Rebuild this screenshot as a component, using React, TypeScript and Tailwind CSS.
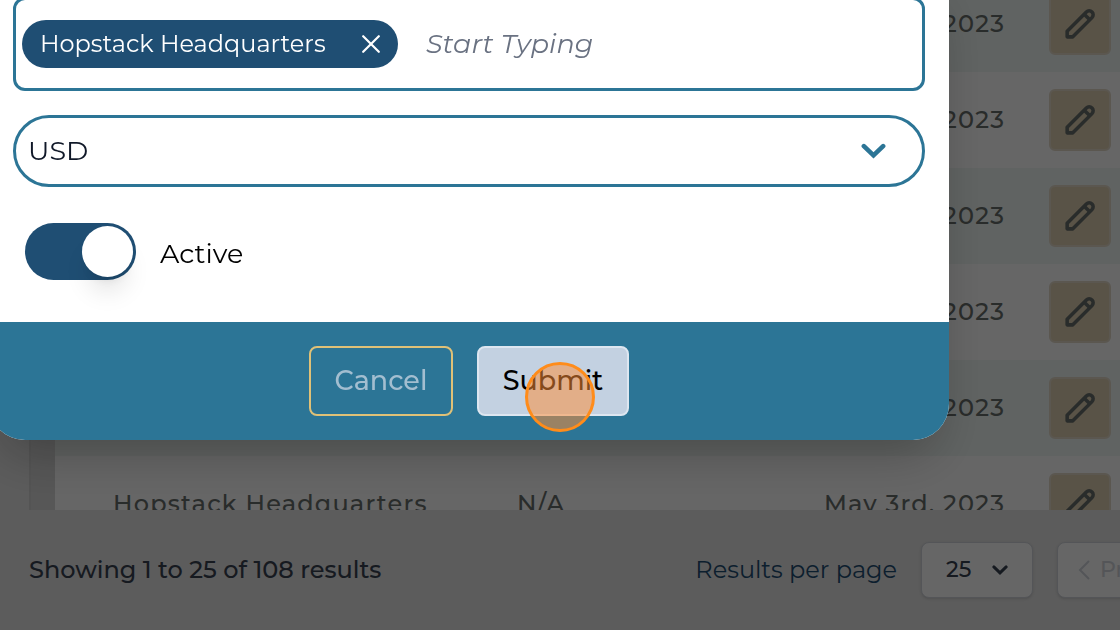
import React, { useState } from 'react';

const rows = [
  { id: 1, warehouse: 'Hopstack Headquarters', code: 'N/A', date: 'May 3rd, 2023' },
  { id: 2, warehouse: 'Hopstack Headquarters', code: 'N/A', date: 'May 3rd, 2023' },
  { id: 3, warehouse: 'Hopstack Headquarters', code: 'N/A', date: 'May 3rd, 2023' },
  { id: 4, warehouse: 'Hopstack Headquarters', code: 'N/A', date: 'May 3rd, 2023' },
  { id: 5, warehouse: 'Hopstack Headquarters', code: 'N/A', date: 'May 3rd, 2023' },
  { id: 6, warehouse: 'Hopstack Headquarters', code: 'N/A', date: 'May 3rd, 2023' },
];

function PencilIcon() {
  return (
    <svg width="30" height="30" viewBox="0 0 32 32" fill="none" stroke="currentColor" strokeWidth="3.8" strokeLinejoin="round">
      <path d="M2.300 29.700v-6L22.800 3.200a4.300 4.300 0 0 1 6 0a4.300 4.300 0 0 1 0 6L8.300 29.700z" />
      <path d="M20.500 5.500l6 6" />
    </svg>
  );
}

function ChevronIcon({ className }: { className: string }) {
  return (
    <svg className={className} viewBox="0 0 26 16" fill="none" stroke="currentColor" strokeWidth="4.8" strokeLinecap="round">
      <path d="M3 3l10 9.6L23 3" />
    </svg>
  );
}

function ResultsTable() {
  return (
    <table className="-mt-6 w-full table-fixed bg-white text-left text-2xl font-medium tracking-wider text-[#686e6b]">
      <colgroup>
        <col className="w-[404px]" />
        <col className="w-[307px]" />
        <col />
        <col className="w-[71px]" />
      </colgroup>
      <tbody>
        {rows.map((row) => (
          <tr key={row.id} className="h-24 odd:bg-[#f0f7f4]">
            <td className="pl-[58px]">{row.warehouse}</td>
            <td className="pl-[58px]">{row.code}</td>
            <td className="pl-[58px] whitespace-nowrap">{row.date}</td>
            <td>
              <button
                type="button"
                aria-label="Edit"
                className="flex size-[62px] items-center justify-center rounded-md border-2 border-[#e3dac9] bg-[#dfd0b2]"
              >
                <PencilIcon />
              </button>
            </td>
          </tr>
        ))}
      </tbody>
    </table>
  );
}

function Pagination() {
  return (
    <footer className="flex h-[120px] shrink-0 items-center bg-[#e5e5e5] pl-[29px] text-2xl">
      <p className="flex-1 font-medium text-[#374151]">Showing 1 to 25 of 108 results</p>
      <label htmlFor="page-size" className="mr-6 text-[#1f4e73]">Results per page</label>
      <div className="mr-6 grid h-14 w-[112px] shrink-0 items-center rounded-lg border border-gray-300 bg-white shadow-sm">
        <select
          id="page-size"
          defaultValue="25"
          className="h-full w-full appearance-none pl-6 text-[22px] font-medium text-[#374151] [grid-area:1/1]"
        >
          <option>25</option>
          <option>50</option>
        </select>
        <ChevronIcon className="pointer-events-none mr-6 h-[10px] w-4 justify-self-end text-[#374151] [grid-area:1/1]" />
      </div>
      <button
        type="button"
        className="-mr-[97px] flex h-14 w-40 shrink-0 items-center gap-[10px] rounded-lg border border-gray-300 bg-white pl-5 text-[22px] font-medium text-gray-300 shadow-sm"
      >
        <svg width="12" height="20" viewBox="0 0 12 20" fill="none" stroke="currentColor" strokeWidth="2" strokeLinecap="round">
          <path d="M10.500 1.500L2 10l8.500 8.500" />
        </svg>
        Prev
      </button>
    </footer>
  );
}

export default function App() {
  const [tags, setTags] = useState(['Hopstack Headquarters']);
  const [active, setActive] = useState(true);

  return (
    <div className="relative flex h-screen flex-col overflow-hidden bg-[#e5e5e5] font-[Montserrat,Inter,sans-serif]">
      <main className="flex min-h-0 flex-1 overflow-hidden pl-[29px]">
        <div className="min-w-0 flex-1 self-start border-l-2 border-[#d2d2d2] bg-[#d9d9d9] pl-6">
          <ResultsTable />
        </div>
      </main>
      <Pagination />

      <div className="fixed inset-0 flex items-start overflow-hidden bg-black/60">
        <form
          onSubmit={(e) => e.preventDefault()}
          className="-mt-[27px] mr-[171px] -ml-[11px] flex-1 overflow-hidden rounded-b-[36px] bg-white shadow-2xl"
        >
          <div className="px-6 pt-6 pb-[42px] text-[27px]">
            <div className="flex h-[94px] items-center rounded-xl border-3 border-[#2c7596] pl-[6px]">
              {tags.map((tag) => (
                <span key={tag} className="flex h-12 w-[376px] items-center justify-between rounded-full bg-[#1f4e73] px-[18px] text-2xl text-white">
                  {tag}
                  <button type="button" aria-label={`Remove ${tag}`} onClick={() => setTags(tags.filter((t) => t !== tag))}>
                    <svg width="18" height="18" viewBox="0 0 18 18" fill="none" stroke="currentColor" strokeWidth="2.2" strokeLinecap="round">
                      <path d="M1.200 1.200l15.600 15.600M16.800 1.200L1.200 16.800" />
                    </svg>
                  </button>
                </span>
              ))}
              <input
                type="text"
                aria-label="Warehouses"
                placeholder="Start Typing"
                className="ml-7 min-w-0 flex-1 outline-none placeholder:text-gray-500 placeholder:italic"
              />
            </div>

            <div className="mt-6 grid h-[72px] items-center rounded-full border-3 border-[#2c7596]">
              <select
                aria-label="Currency"
                defaultValue="USD"
                className="h-full w-full appearance-none rounded-full pl-3 text-gray-900 [grid-area:1/1]"
              >
                <option>USD</option>
                <option>EUR</option>
              </select>
              <ChevronIcon className="pointer-events-none mr-9 h-4 w-[25px] justify-self-end text-[#2c7596] [grid-area:1/1]" />
            </div>

            <label className="mt-9 ml-3 flex w-fit items-center gap-6 text-black">
              <input type="checkbox" checked={active} onChange={(e) => setActive(e.target.checked)} className="peer sr-only" />
              <span className="flex h-[57px] w-[111px] justify-start rounded-full bg-gray-300 p-[3px] peer-checked:justify-end peer-checked:bg-[#1f4e73]">
                <span className="size-[51px] rounded-full bg-white shadow-xl" />
              </span>
              <span className="pt-[6px]">Active</span>
            </label>
          </div>

          <div className="flex justify-center gap-6 bg-[#2c7596] py-6 text-[27px] font-medium">
            <button type="button" className="h-[70px] w-36 rounded-lg border-2 border-[#e0c177] text-[#a3bed0]">
              Cancel
            </button>
            <button type="submit" className="relative h-[70px] w-[152px] rounded-lg border-2 border-[#dde6f0] bg-[#c3d1e1] text-black">
              Submit
              <span className="absolute top-[14px] left-[46px] size-[70px] rounded-full border-3 border-[#ff8c1a] bg-[#ff8e36]/52" />
            </button>
          </div>
        </form>
      </div>
    </div>
  );
}
